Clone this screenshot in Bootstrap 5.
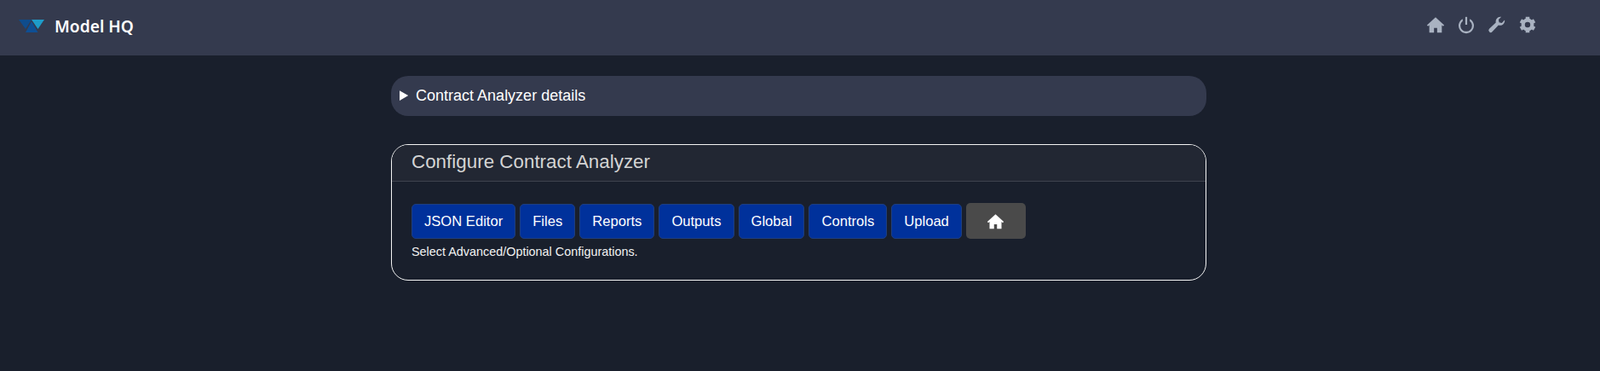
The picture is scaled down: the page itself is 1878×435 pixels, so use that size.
<!DOCTYPE html>
<html lang="en"><head><meta charset="utf-8"><title>Model HQ</title>
<link href="https://cdn.jsdelivr.net/npm/bootstrap@5.3.0/dist/css/bootstrap.min.css" rel="stylesheet">
<style>
html,body{height:100%}
body{background:#191f2c;font-family:"Liberation Sans",Arial,sans-serif;color:#fff;overflow:hidden}
.topbar{height:65px;background:#343a4e;padding:0 0 4px 22px}
.brand-name{font-family:"Noto Sans","Open Sans",sans-serif;font-weight:600;font-size:19.2px;color:#fff;margin-left:12px;line-height:1}
.top-icons{gap:14px;margin-right:74px;margin-bottom:3px}
.top-icons svg{display:block;width:22px;height:22px;fill:#a9b2c1}
.page-col{width:957px;margin:24px auto 0 459px}
.info-box{background:#343a4e;border-radius:20px;height:47px;padding:0 10px;line-height:47px;font-size:18px;margin-bottom:33px;cursor:default}
.cfg-card{background:#191f2c;border:1px solid #f4f4f4;border-radius:20px;height:160px;overflow:hidden;color:#fff}
.cfg-head{background:#222733;border-bottom:1px solid #3e424e;height:43px;padding:0 23px;font-size:22.4px;line-height:39px;color:#d4d4d4}
.cfg-body{padding:25px 23px 0}
.btn-row{gap:5px;align-items:center}
.cfg-btn{background:#00319b;border:1px solid #1f3f7f;color:#fff;font-size:16.6px;height:41px;padding:0 14px;border-radius:5px;line-height:39px}
.cfg-btn:hover{background:#00319b;color:#fff;border-color:#1f3f7f}
.cfg-home{background:#4a4a4a;border:0;height:42px;width:70px;border-radius:5px;padding:0}
.cfg-home svg{width:21px;height:21px;fill:#fff;display:block;margin:auto}
.hint{font-size:14.4px;margin-top:6px;line-height:18px;color:#f2f2f2}
.gear-ic{fill:none!important;stroke:#a9b2c1}
</style></head>
<body>
<nav class="topbar d-flex align-items-center justify-content-between">
  <div class="d-flex align-items-center">
    <svg width="30" height="15" viewBox="0 0 30 15" aria-hidden="true"><polygon points="0,0 15,0 8,11" fill="#0f4c8c"/><polygon points="15,0 30,0 22.5,11" fill="#1e9cc9"/><polygon points="8,15 22.5,15 15,2" fill="#0e4f94"/></svg>
    <span class="brand-name">Model HQ</span>
  </div>
  <div class="top-icons d-flex align-items-center">
    <svg viewBox="0 0 24 24"><path d="M12 2.5 1 12.5l1.3 1.5L4 12.5V22h6v-6h4v6h6v-9.5l1.7 1.5 1.3-1.5z"/></svg>
    <svg viewBox="0 0 24 24"><path d="M10.8 2h2.4v10h-2.4z"/><path d="M7.5 4.6v2.7a7.4 7.4 0 1 0 9 0V4.6a9.8 9.8 0 1 1-9 0z"/></svg>
    <svg viewBox="0 0 24 24"><path d="M22 6.5a6 6 0 0 1-8 6.1L6 21a2.6 2.6 0 0 1-3.8-3.7l8.4-8.1A6 6 0 0 1 17.6 2l-3.5 3.5.7 3.5 3.5.8L21.8 6z"/></svg>
    <svg class="gear-ic" viewBox="0 0 24 24"><circle cx="12" cy="12" r="5.8" stroke-width="4.6"/><g stroke-width="5"><path d="M12 1.8v4M12 18.2v4M3.2 6.9l3.4 2M17.4 15.1l3.4 2M3.2 17.1l3.4-2M17.4 8.9l3.4-2"/></g></svg>
  </div>
</nav>
<main class="page-col">
  <details class="info-box"><summary>Contract Analyzer details</summary></details>
  <section class="cfg-card">
    <div class="cfg-head">Configure Contract Analyzer</div>
    <div class="cfg-body">
      <div class="d-flex btn-row">
        <button class="btn cfg-btn">JSON Editor</button>
        <button class="btn cfg-btn">Files</button>
        <button class="btn cfg-btn">Reports</button>
        <button class="btn cfg-btn">Outputs</button>
        <button class="btn cfg-btn">Global</button>
        <button class="btn cfg-btn">Controls</button>
        <button class="btn cfg-btn">Upload</button>
        <button class="btn cfg-home d-flex align-items-center" aria-label="Home"><svg viewBox="0 0 24 24"><path d="M12 2.5 1 12.5l1.3 1.5L4 12.5V22h6v-6h4v6h6v-9.5l1.7 1.5 1.3-1.5z"/></svg></button>
      </div>
      <div class="hint">Select Advanced/Optional Configurations.</div>
    </div>
  </section>
</main>
<script src="https://cdn.jsdelivr.net/npm/bootstrap@5.3.0/dist/js/bootstrap.bundle.min.js"></script>
</body></html>
